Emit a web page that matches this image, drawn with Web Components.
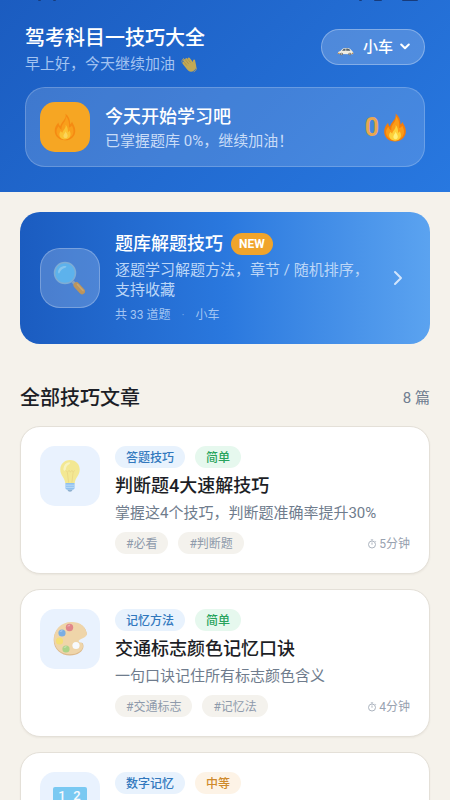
<!DOCTYPE html>
<html lang="zh-CN">
<head>
<meta charset="utf-8">
<meta name="viewport" content="width=device-width, initial-scale=1">
<title>驾考科目一技巧大全</title>
<style>
  body { margin: 0; background: #f5f2eb; color: #1c1e26; font-family: Roboto, "Noto Sans CJK SC", sans-serif; font-size: 15px; line-height: 20px; }
</style>
</head>
<body>
<tips-page>
  <app-header slot="header" heading="驾考科目一技巧大全" greeting="早上好，今天继续加油">
    <vehicle-picker value="小车"></vehicle-picker>
    <streak-card slot="streak" heading="今天开始学习吧" note="已掌握题库 0%，继续加油！" days="0"></streak-card>
  </app-header>
  <feature-card heading="题库解题技巧" badge="NEW" count="共 33 道题" vehicle="小车">逐题学习解题方法，章节 / 随机排序，支持收藏</feature-card>
  <article-list heading="全部技巧文章" count="8 篇">
    <article-card icon="bulb" heading="判断题4大速解技巧" note="掌握这4个技巧，判断题准确率提升30%" time="5分钟">
      <tip-chip slot="chips">答题技巧</tip-chip><tip-chip slot="chips" tone="easy">简单</tip-chip>
      <tip-chip slot="tags" tone="tag">#必看</tip-chip><tip-chip slot="tags" tone="tag">#判断题</tip-chip>
    </article-card>
    <article-card icon="palette" heading="交通标志颜色记忆口诀" note="一句口诀记住所有标志颜色含义" time="4分钟">
      <tip-chip slot="chips">记忆方法</tip-chip><tip-chip slot="chips" tone="easy">简单</tip-chip>
      <tip-chip slot="tags" tone="tag">#交通标志</tip-chip><tip-chip slot="tags" tone="tag">#记忆法</tip-chip>
    </article-card>
    <article-card icon="numbers">
      <tip-chip slot="chips">数字记忆</tip-chip><tip-chip slot="chips" tone="medium">中等</tip-chip>
    </article-card>
  </article-list>
</tips-page>

<script>
const ICONS = {
  flame: ['0 0 24 30', `
    <path fill="#f57c0a" d="M12.6.5c.7 3.2-.4 5.2-2.3 7.6-1.500 1.900-3 3.800-3.500 6C5.600 13.200 5 12 4.900 10.200 2.200 13 .8 16 .8 19.200.8 25.400 5.600 29.500 12 29.500s11.200-4.300 11.200-10.500c0-4.400-2.300-6.900-3.500-9.700-.7 1.200-1.200 2-2 2.600C17.700 7.400 16.200 3 12.600.5z"/>
    <path fill="#fb9c18" d="M12.600 3c1 4-1.200 6.300-2.900 8.800-1.500 2.200-1.700 4.200-1.400 6.200-1.700-.7-2.700-2-3.200-3.700-1.600 2-2.400 3.500-2.400 5.400 0 5 4.300 8.400 9.400 8.400 5.300 0 9.200-3.700 9.200-8.600 0-2.600-.9-4.400-1.800-6.200-.7 1.200-1.800 2-3.200 2.300C16.900 10.500 15.900 6 12.600 3z"/>
    <path fill="#fdd13a" d="M12.700 12.500c.4 3.200-1.200 4.400-2.600 6.500-.5.8-.8 1.500-.9 2.300-.9-.4-1.500-1-1.800-1.900-1 1.400-1.600 2.600-1.500 4 .2 3.100 2.800 5.200 6.200 5.200s6-2.300 6-5.600c0-1.800-.6-3-1.200-4.200-.4.9-.9 1.400-1.700 1.700.2-3.300-.6-6-2.500-8z"/>
    <path fill="#fff07a" d="M12.500 19.500c.1 2-1.900 2.700-2.200 5 0 1.500 1 2.600 2.300 2.600s2.300-1 2.300-2.500c0-2-1.400-3-2.400-5.100z"/>`],
  wave: ['0 0 20 20', `
    <g transform="rotate(-38 10 10)"><path fill="#f8bf2d" d="M4.200 9.500V4.200a1.300 1.300 0 0 1 2.600 0V2.300a1.400 1.400 0 0 1 2.800 0v.2a1.400 1.400 0 0 1 2.700.3v1.300a1.300 1.300 0 0 1 2.600.1v6.300c.6-.9 1.300-2.100 2.400-2 .9.100 1.200.9.900 1.600l-2.500 5.100C14.700 17.700 12.900 19 10 19c-3.700 0-5.800-2.300-5.800-5.600z"/>
    <path stroke="#c98a1e" stroke-width=".6" fill="none" d="M6.800 4.200V9M9.600 3V9M12.300 4V9"/></g>
    <path stroke="#e0b24a" stroke-width="1" fill="none" stroke-linecap="round" d="M1 7c0-2 .8-3.300 2.200-4.200M18.200 14c-.1 2.300-1 3.700-2.900 4.500"/>`],
  car: ['0 0 19 12', `<g transform="translate(1 2.500) scale(.9 .78)">
    <path fill="#f1eee2" d="M1 9.500c-.2-2 .3-3.300 2.800-3.800L6 3.200C7 2.100 8.200 1.800 10.300 1.800c3 0 4.300.6 5.400 2.600.7 1.100 2.300 1.900 2.400 3.600 0 1-.1 1.600-.6 1.900z"/>
    <path fill="#55626b" d="M5.500 5.500 7.200 3.300c.5-.5 1.300-.7 2.300-.7v2.900zM10.200 2.600c2.500 0 3.800.5 4.700 2.900h-4.700z"/>
    <path fill="#b98a55" d="M1 8h2v1.500H1zM16.700 8H18v1.500h-1.500z"/>
    <circle cx="5" cy="9.600" r="1.700" fill="#6f6a60"/><circle cx="14.300" cy="9.600" r="1.700" fill="#6f6a60"/>
    <circle cx="5" cy="9.600" r=".8" fill="#cfd4d8"/><circle cx="14.300" cy="9.600" r=".8" fill="#cfd4d8"/></g>`],
  magnifier: ['0 0 34 34', `
    <path stroke="#9eabb5" stroke-width="3" d="m19.500 20.500 4 4"/>
    <path stroke="#e19a35" stroke-width="6" stroke-linecap="round" d="m23.500 24.300 5.500 6"/>
    <path stroke="#f1b34f" stroke-width="1.500" stroke-linecap="round" d="m24.500 23.600 5.500 6"/>
    <circle cx="12" cy="12" r="10.500" fill="#63c3f5" stroke="#8fbbd6" stroke-width="1.500"/>
    <path fill="#9bdcf8" d="M5 11c.5-4 3.500-6.200 7.500-6 1 .1 1.200 1 .2 1.400C9 7.600 7.500 9 6.500 12c-.4 1-1.500.300-1.500-1z"/>`],
  bulb: ['0 0 34 36', `
    <path fill="#f9e45b" d="M17 1C10.600 1 6.700 5.700 6.700 11.300c0 6.200 5.300 8.700 5.300 14.700h10c0-6 5.300-8.500 5.300-14.700C27.300 5.700 23.400 1 17 1z"/>
    <path fill="#fff4a0" d="M10 10.500C10.500 6.500 12.500 4 16 3.500c1.500 0 1.500 1.300.2 2-2.700 1.200-3.400 3-3.700 6-.3 1.700-2.600 1-2.500-1z"/>
    <path fill="none" stroke="#e6c040" stroke-width=".7" d="m12.500 12 1.800 2 1.700-2 1.500 2 1.500-2 1.500 2 1.300-2M14.200 14l1.300 11M20.300 14 19 25"/>
    <path fill="#62a8e8" d="M12.200 25.500h9.600v5.300c0 1-1 1.800-2 1.800h-5.600c-1 0-2-.8-2-1.800z"/>
    <path stroke="#a9d2f6" stroke-width="1" d="M12.500 27.700h9M12.500 30h9"/><path fill="#5f8fb8" d="M14.300 32.600h5.400c-.3 1.300-1.300 2-2.700 2s-2.400-.7-2.700-2z"/>`],
  palette: ['0 0 34 34', `
    <path fill="#d79d50" d="M18.700.7C7.500.7.700 9 .7 18 .7 27.500 8 33.500 17 33.500c7.500 0 13.500-4 13.500-9.500 0-3-2-4.300-4-4 4-1.200 7.500-2.300 7.500-6.500C33.700 4.500 27 .7 18.700.7z"/>
    <path fill="#f3c67c" d="M18.700 0C7.500 0 1 8.300 1 17c0 9.300 7.200 15.300 16 15.300 7.300 0 13-3.800 13-8.300 0-2.700-1.800-4-4-4.200C29.500 18.500 34 17.500 34 13.500 33.500 4.200 26.800 0 18.700 0z"/>
    <path fill="#e9f2fe" d="M34 12.500c-2 3.500-5.500 4-7.700 5.500-1 .8-.8 1.800.2 2.200C29 21 32 21 34 19z"/>
    <circle cx="23" cy="23.500" r="3.600" fill="#fff"/>
    <circle cx="16.500" cy="5.500" r="3.700" fill="#dd4d4d"/><circle cx="9" cy="11" r="3.600" fill="#408bd5"/>
    <circle cx="6.500" cy="19" r="3.600" fill="#fad52f"/><circle cx="13" cy="27" r="3.600" fill="#8bc34a"/>
    <path fill="#fff" opacity=".4" d="M14 4.500c.8-1.600 2-2 3.500-1.800l-1 1.500zM6.500 10c.7-1.500 2-2 3.300-1.800l-.8 1.300zM10.500 26c.7-1.500 2-2 3.300-1.800l-.8 1.300z"/>`],
  numbers: ['0 0 34 34', `
    <rect y="2" width="34" height="32" rx="2" fill="#3fb4ec"/>
    <g fill="#fff" font-family="Roboto, sans-serif" font-size="13" font-weight="500" text-anchor="middle"><text x="9" y="15">1</text><text x="24" y="15">2</text></g>`],
  timer: ['0 0 10 10', `<g fill="none" stroke="#a3acb8" stroke-width=".9"><circle cx="5" cy="5.500" r="3.500"/><path d="M5 5.700V3.500M3.800.9h2.400M8 1.900l.8.800"/></g>`],
  down: ['0 0 10 10', `<path fill="none" stroke="#fff" stroke-width="2" stroke-linecap="round" stroke-linejoin="round" d="m1.200 2.500 3.800 3.800L8.800 2.500"/>`],
  right: ['0 0 10 16', `<path fill="none" stroke="#d2e5fc" stroke-width="2" stroke-linecap="round" stroke-linejoin="round" d="m2 2 6 6-6 6"/>`]
};

class Base extends HTMLElement {
  connectedCallback() {
    if (this.shadowRoot) return;
    this.attachShadow({ mode: 'open' }).innerHTML = `<style>*{box-sizing:border-box}:host{box-sizing:border-box}h1,h2,h3,p{margin:0;font-weight:500}a{color:inherit;text-decoration:none}</style>` + this.render();
  }
  at(name) { return this.getAttribute(name) || ''; }
}

customElements.define('ui-icon', class extends Base {
  render() {
    const [box, body] = ICONS[this.at('name')];
    return `<style>:host{display:block;flex:none}svg{display:block;width:100%;height:100%}</style><svg viewBox="${box}" aria-hidden="true">${body}</svg>`;
  }
});

customElements.define('tips-page', class extends Base {
  render() {
    return `<style>
      :host{display:block}
      main{display:flex;flex-direction:column;gap:41px;padding:20px}
    </style><slot name="header"></slot><main><slot></slot></main>`;
  }
});

customElements.define('app-header', class extends Base {
  render() {
    return `<style>
      :host{display:block;background:linear-gradient(135deg,#1b5cc0,#2878e0);color:#fff;padding-bottom:25px}
      .status{display:flex;height:2px;padding:0 32px 0 38px;gap:12px;color:#173b7b}
      .status i{height:1px;background:currentColor;width:3px;border-radius:0 0 2px 2px}
      .status i:nth-child(2){margin-right:auto}
      .status i:nth-child(4){width:8px}
      .status i:last-child{width:16px;height:1px;margin-left:8px}
      .top{display:flex;align-items:flex-start;justify-content:space-between;padding:23px 25px 13px}
      h1{font-size:20px;line-height:26px}
      p{display:flex;align-items:center;gap:6px;margin-top:3px;font-weight:400;line-height:20px;color:#a3c3f1}
      ui-icon{width:17px;height:17px;opacity:.75}
      .pick{padding-top:4px}
      .streak{padding:0 25px}
    </style>
    <div class="status" aria-hidden="true"><i></i><i></i><i></i><i></i><i></i></div>
    <header class="top"><div><h1>${this.at('heading')}</h1><p>${this.at('greeting')}<ui-icon name="wave"></ui-icon></p></div><div class="pick"><slot></slot></div></header>
    <div class="streak"><slot name="streak"></slot></div>`;
  }
});

customElements.define('vehicle-picker', class extends Base {
  render() {
    return `<style>
      :host{display:block}
      label{display:flex;align-items:center;height:36px;padding:0 14px;border:1px solid rgba(255,255,255,.3);border-radius:18px;background:rgba(255,255,255,.2)}
      .car{width:19px;height:12px;margin-top:6px}
      select{appearance:none;border:0;background:none;padding:0;margin:0 6px 0 8px;color:#fff;font:500 15px/20px Roboto,"Noto Sans CJK SC",sans-serif}
      .down{width:10px;height:10px}
    </style><label><ui-icon class="car" name="car"></ui-icon><select aria-label="${this.at('value')}"><option>${this.at('value')}</option></select><ui-icon class="down" name="down"></ui-icon></label>`;
  }
});

customElements.define('streak-card', class extends Base {
  render() {
    return `<style>
      :host{display:flex;align-items:center;gap:15px;padding:14px 17px 14px 14px;border:1px solid rgba(255,255,255,.2);border-radius:20px;background:rgba(255,255,255,.15)}
      .tile{display:grid;place-items:center;width:50px;height:50px;border-radius:15px;background:#f6a623}
      .tile ui-icon{width:22px;height:28px;opacity:.65}
      .text{flex:1;padding-top:2px}
      h2{font-size:18px;line-height:24px}
      p{font-weight:400;margin-top:2px;color:#c9dcf7}
      .days{display:flex;align-items:center;gap:4px;color:#e9a750;font-size:25px;font-weight:700;line-height:28px}
      .days span{padding-top:2px}
      .days ui-icon{width:24px;height:29px}
    </style><div class="tile"><ui-icon name="flame"></ui-icon></div>
    <div class="text"><h2>${this.at('heading')}</h2><p>${this.at('note')}</p></div>
    <div class="days"><span>${this.at('days')}</span><ui-icon name="flame"></ui-icon></div>`;
  }
});

customElements.define('feature-card', class extends Base {
  render() {
    return `<style>
      :host{display:block}
      a{display:flex;align-items:center;gap:15px;padding:20px 27px 20px 20px;border-radius:20px;color:#fff;background:linear-gradient(90deg,#1b5cc0,#2a78de 50%,#5ba3f0)}
      .tile{display:grid;place-items:center;flex:none;width:60px;height:60px;border:1px solid rgba(255,255,255,.25);border-radius:20px;background:rgba(255,255,255,.2)}
      .tile ui-icon{width:34px;height:34px;opacity:.75}
      .text{flex:1}
      .head{display:flex;align-items:center;gap:8px}
      h2{font-size:18px;line-height:24px}
      .badge{padding:0 8px;border-radius:11px;background:#f0a42b;font-size:12px;font-weight:700;line-height:22px}
      p{font-weight:400;margin-top:4px;color:#bcd6f7}
      .meta{display:flex;gap:11px;margin-top:6px;font-size:12px;line-height:18px;color:#a3c5f2}
      .dot{color:#6c9fe6}
      .go{width:10px;height:16px}
    </style><a href="#bank"><div class="tile"><ui-icon name="magnifier"></ui-icon></div>
    <div class="text"><div class="head"><h2>${this.at('heading')}</h2><span class="badge">${this.at('badge')}</span></div>
    <p><slot></slot></p><div class="meta"><span>${this.at('count')}</span><span class="dot">·</span><span>${this.at('vehicle')}</span></div></div>
    <ui-icon class="go" name="right"></ui-icon></a>`;
  }
});

customElements.define('article-list', class extends Base {
  render() {
    return `<style>
      :host{display:flex;flex-direction:column;gap:15px}
      .head{display:flex;align-items:center;justify-content:space-between}
      h2{font-size:20px;line-height:26px}
      span{color:#6f7d90}
    </style><div class="head"><h2>${this.at('heading')}</h2><span>${this.at('count')}</span></div><slot></slot>`;
  }
});

customElements.define('tip-chip', class extends Base {
  render() {
    return `<style>
      :host{display:block;padding:2px 11px 0;border-radius:11px;font-size:12px;line-height:20px;font-weight:500;background:#e8f2fd;color:#3278bd}
      :host([tone=easy]){background:#e6f8ee;color:#27a35c}
      :host([tone=medium]){background:#fdf3e6;color:#cf8a2c}
      :host([tone=tag]){background:#f4f2ed;color:#8e9aab;font-weight:400}
    </style><slot></slot>`;
  }
});

customElements.define('article-card', class extends Base {
  render() {
    const body = this.at('heading') ? `<h3>${this.at('heading')}</h3><p>${this.at('note')}</p>
      <div class="foot"><slot name="tags"></slot><span class="time"><ui-icon class="timer" name="timer"></ui-icon>${this.at('time')}</span></div>` : '';
    return `<style>
      :host{display:block}
      a{display:flex;align-items:flex-start;gap:15px;min-height:148px;padding:19px;border:1px solid #e4e0d8;border-radius:20px;background:#fff;box-shadow:0 1px 2px rgba(60,50,30,.06)}
      .tile{display:grid;place-items:center;flex:none;width:60px;height:60px;border-radius:15px;background:#e9f2fe}
      .tile ui-icon{width:34px;height:34px;opacity:.65}
      .text{flex:1}
      .chips,.foot{display:flex;align-items:center;gap:10px}
      h3{margin-top:6px;font-size:18px;line-height:24px}
      p{margin-top:5px;font-weight:400;color:#6f7c8d}
      .foot{margin-top:9px}
      .time{display:flex;align-items:center;gap:2px;margin-left:auto;padding-top:2px;font-size:12px;color:#98a2b0}
      .timer{width:10px;height:10px}
    </style><a href="#article"><div class="tile"><ui-icon name="${this.at('icon')}"></ui-icon></div>
    <div class="text"><div class="chips"><slot name="chips"></slot></div>${body}</div></a>`;
  }
});
</script>
</body>
</html>
